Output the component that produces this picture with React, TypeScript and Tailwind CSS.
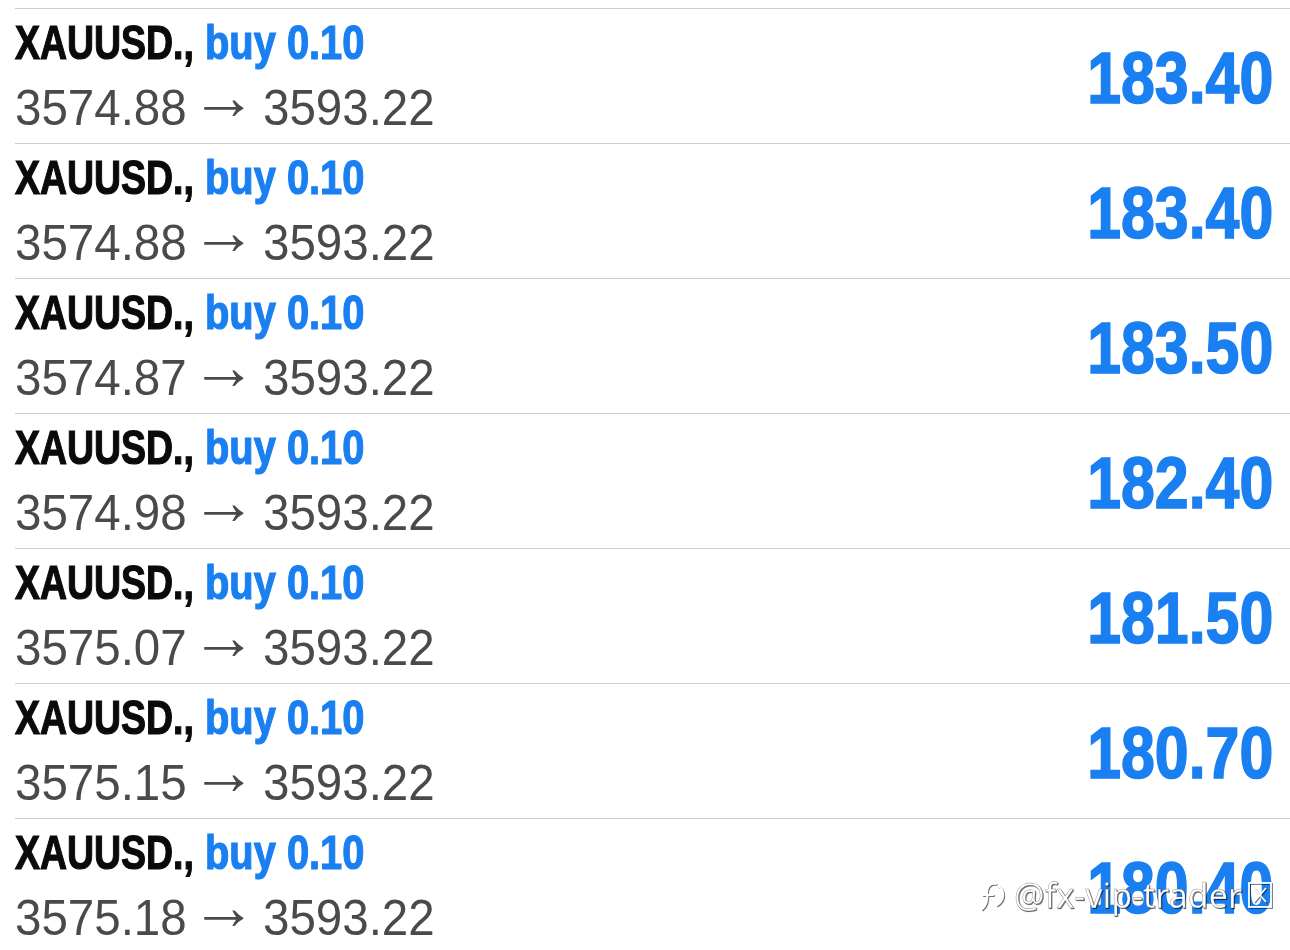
import React from "react";

const rows = [
  { open: "3574.88", profit: "183.40" },
  { open: "3574.88", profit: "183.40" },
  { open: "3574.87", profit: "183.50" },
  { open: "3574.98", profit: "182.40" },
  { open: "3575.07", profit: "181.50" },
  { open: "3575.15", profit: "180.70" },
  { open: "3575.18", profit: "180.40" },
];

export default function App() {
  return (
    <div
      className="relative w-[1290px] h-[950px] overflow-hidden bg-white pt-[8px]"
      style={{ fontFamily: '"Liberation Sans", Arial, sans-serif' }}
    >
      {rows.map((r, i) => (
        <div
          key={i}
          className="ml-[15px] h-[135px] border-t border-[#cdcdcf] flex items-start justify-between pr-[17px] pt-[10px]"
        >
          <div className="flex-1">
            <div className="h-[48px] flex items-start whitespace-nowrap text-[48px] leading-[48px] font-bold">
              <span className="w-[178px] inline-block text-[#0a0a0a] origin-left scale-x-[0.78] [-webkit-text-stroke:1.2px_#0a0a0a]">
                XAUUSD.,
              </span>
              <span className="ml-[12px] inline-block text-[#1a7ff0] origin-left scale-x-[0.83] [-webkit-text-stroke:1.2px_#1a7ff0]">
                buy 0.10
              </span>
            </div>
            <div className="mt-[16px] h-[50px] flex items-center whitespace-nowrap text-[50px] leading-[50px] text-[#4a4a4c]">
              <span className="inline-block w-[171px] origin-left scale-x-[0.95]">{r.open}</span>
              <span className="ml-[5px] inline-block w-[60px] h-[24px] text-[66px] leading-[24px] -translate-y-[12px]">
                →
              </span>
              <span className="ml-[12px] inline-block origin-left scale-x-[0.95]">3593.22</span>
            </div>
          </div>
          <div className="mt-[23px] text-[72px] leading-[72px] font-bold text-[#1a7ff0] origin-right scale-x-[0.845] whitespace-nowrap [-webkit-text-stroke:1.6px_#1a7ff0]">
            {r.profit}
          </div>
        </div>
      ))}

      <div className="absolute left-[978px] top-[876px] flex items-center gap-[6px] [filter:drop-shadow(1px_1px_0.5px_rgba(0,0,0,0.55))]">
        <svg className="shrink-0" width="30" height="38" viewBox="0 0 30 38" fill="none" stroke="white" strokeWidth="2.2" strokeLinecap="round">
          <path d="M18 8 C 12 6, 8 12, 9 18 C 10 24, 8 30, 4 33" />
          <path d="M5 19 L 15 19" />
          <path d="M20 10 C 27 14, 27 24, 19 29" />
        </svg>
        <span
          className="text-[34px] leading-[36px] text-white whitespace-nowrap [-webkit-text-stroke:0.4px_rgba(0,0,0,0.5)]"
          style={{ fontFamily: '"Noto Sans", "Liberation Sans", sans-serif' }}
        >
          @fx-vip-trader
        </span>
        <svg className="shrink-0" width="24" height="26" viewBox="0 0 24 26" fill="none" stroke="white" strokeWidth="1.8">
          <rect x="1" y="1" width="22" height="24" />
          <path d="M6 6 L18 20 M18 6 L6 20" />
        </svg>
      </div>
    </div>
  );
}
